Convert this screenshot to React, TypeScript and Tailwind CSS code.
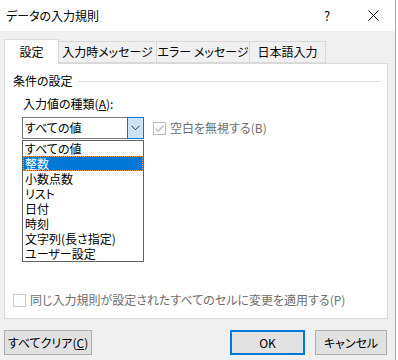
import React from 'react';

const font = "font-['Noto_Sans_CJK_JP','Noto_Sans',sans-serif] [font-feature-settings:'palt']";

const items = ['すべての値', '整数', '小数点数', 'リスト', '日付', '時刻', '文字列(長さ指定)', 'ユーザー設定'];

const tabs = [
  { label: '入力時メッセージ', w: 'w-[98px]' },
  { label: 'エラー メッセージ', w: 'w-[93px]' },
  { label: '日本語入力', w: 'w-[76px]' },
];

const CheckMark = () => (
  <svg width="11" height="11" viewBox="0 0 11 11" className="block">
    <path d="M1.5 5.5 L4.2 8.2 L9.5 2.5" fill="none" stroke="#bcbcbc" strokeWidth="1.3" />
  </svg>
);

export default function App() {
  return (
    <div className={`w-[398px] h-[360px] bg-white text-[12px] leading-[16px] text-black ${font}`}>
      <div className="w-[396px] h-[360px] border-r border-[#a8a8a8] flex flex-col">
        {/* title bar */}
        <div className="h-[31px] bg-white flex items-center pl-[6px]">
          <span className="flex-1 text-[12px]">データの入力規則</span>
          <span className="w-[10px] mr-[34px] text-[13px]">?</span>
          <svg width="11" height="11" viewBox="0 0 11 11" className="mr-[16px]">
            <path d="M0.5 0.5 L10.5 10.5 M10.5 0.5 L0.5 10.5" stroke="#111" strokeWidth="1" />
          </svg>
        </div>

        <div className="flex-1 bg-[#f0f0f0] px-[4px] pt-[8px] flex flex-col">
          {/* tabs */}
          <div className="flex items-end h-[24px] relative z-10">
            <div className="w-[55px] h-[25px] -mb-[1px] bg-white border border-b-0 border-[#d9d9d9] flex items-center justify-center">
              設定
            </div>
            {tabs.map((t) => (
              <div
                key={t.label}
                className={`${t.w} h-[22px] bg-[#f0f0f0] border border-l-0 border-[#d9d9d9] flex items-center justify-center`}
              >
                {t.label}
              </div>
            ))}
          </div>

          {/* panel */}
          <div className="w-[384px] h-[256px] bg-white border border-[#d9d9d9] relative flex flex-col pl-[8px] pr-[6px] pt-[9px] pb-[10px]">
            <div className="flex items-center">
              <span>条件の設定</span>
              <div className="flex-1 h-px bg-[#dcdcdc] ml-[5px]" />
            </div>

            <div className="ml-[10px] mt-[7px]">
              入力値の種類(<span className="underline">A</span>):
            </div>

            <div className="flex items-center mt-[5px] ml-[9px]">
              <div className="w-[122px] h-[22px] border border-[#7a7a7a] flex items-stretch relative">
                <span className="flex-1 pl-[2px] flex items-center">すべての値</span>
                <div className="w-[17px] -my-px -mr-px border border-[#0078d7] bg-[#cce4f7] flex items-center justify-center">
                  <svg width="9" height="6" viewBox="0 0 9 6">
                    <path d="M0.5 0.8 L4.5 4.8 L8.5 0.8" fill="none" stroke="#333" strokeWidth="1" />
                  </svg>
                </div>

                {/* dropdown list */}
                <div className="absolute left-[-1px] top-[22px] w-[122px] bg-white border border-[#646464] z-20">
                  {items.map((it, i) => (
                    <div
                      key={it}
                      className={`h-[15px] leading-[15px] pl-[2px] ${
                        i === 1 ? 'bg-[#0078d7] text-white outline-1 outline-dotted outline-[#ff9d3b] -outline-offset-1' : ''
                      }`}
                    >
                      {it}
                    </div>
                  ))}
                </div>
              </div>

              <div className="ml-[9px] flex items-center text-[#6d6d6d]">
                <div className="w-[13px] h-[13px] border border-[#bcbcbc] flex items-center justify-center">
                  <CheckMark />
                </div>
                <span className="ml-[4px]">空白を無視する(B)</span>
              </div>
            </div>

            <div className="mt-auto flex items-center text-[#6d6d6d]">
              <div className="w-[13px] h-[13px] border border-[#cccccc] bg-white" />
              <span className="ml-[4px]">同じ入力規則が設定されたすべてのセルに変更を適用する(P)</span>
            </div>
          </div>

          {/* buttons */}
          <div className="flex mt-[11px]">
            <button className="w-[88px] h-[25px] bg-[#e1e1e1] border border-[#adadad] flex items-center justify-center">
              すべてクリア(<span className="underline">C</span>)
            </button>
            <button className="ml-auto w-[75px] h-[25px] bg-[#e1e1e1] border-2 border-[#0078d7] flex items-center justify-center">
              OK
            </button>
            <button className="ml-[10px] mr-[4px] w-[72px] h-[25px] bg-[#e1e1e1] border border-[#adadad] flex items-center justify-center">
              キャンセル
            </button>
          </div>
        </div>
      </div>
    </div>
  );
}
